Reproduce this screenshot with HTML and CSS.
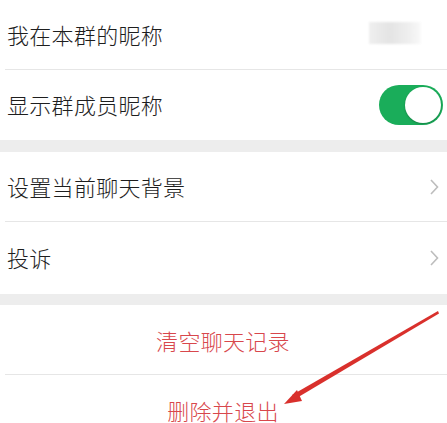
FILE: index.html
```html
<!DOCTYPE html>
<html lang="zh-CN">

<head>
    <meta charset="UTF-8">
    <meta name="viewport" content="width=device-width, initial-scale=1.0">
    <title>聊天信息</title>
    <link rel="stylesheet" href="styles.css">
</head>

<body>
    <div class="page">
        <div class="group">
            <div class="cell line">
                <span class="label">我在本群的昵称</span>
                <span class="nick-blur"></span>
            </div>
            <div class="cell">
                <span class="label">显示群成员昵称</span>
                <span class="switch on"><span class="knob"></span></span>
            </div>
        </div>

        <div class="gap"></div>

        <div class="group">
            <div class="cell line">
                <span class="label">设置当前聊天背景</span>
                <svg class="chevron" width="9" height="16" viewBox="0 0 9 16">
                    <path d="M1 1 L7.5 8 L1 15" fill="none" stroke="#bdbdbd" stroke-width="1.6" />
                </svg>
            </div>
            <div class="cell tall">
                <span class="label">投诉</span>
                <svg class="chevron" width="9" height="16" viewBox="0 0 9 16">
                    <path d="M1 1 L7.5 8 L1 15" fill="none" stroke="#bdbdbd" stroke-width="1.6" />
                </svg>
            </div>
        </div>

        <div class="gap small"></div>

        <div class="group">
            <div class="cell center line">
                <span class="danger">清空聊天记录</span>
            </div>
            <div class="cell center">
                <span class="danger">删除并退出</span>
            </div>
        </div>

        <!-- 红色箭头标注 -->
        <svg class="arrow" width="447" height="423" viewBox="0 0 447 423">
            <polygon points="438,311 439,313.5 295,399 292,395" fill="#d9302c" />
            <polygon points="284,404 297,390 302,401" fill="#d9302c" />
        </svg>
    </div>
</body>

</html>
```

FILE: styles.css
```css
body {
    margin: 0;
    background-color: #fff;
    font-family: "Noto Sans CJK SC", "Noto Sans", sans-serif;
}

.page {
    position: relative;
    width: 447px;
    height: 423px;
    overflow: hidden;
}

.group {
    background-color: #fff;
}

.cell {
    height: 70px;
    display: flex;
    align-items: center;
    justify-content: space-between;
    padding: 0 8px 0 7px;
    position: relative;
}

.cell.tall {
    height: 72px;
}

.cell.line::after {
    content: "";
    position: absolute;
    left: 5px;
    right: 0;
    bottom: 0;
    height: 1px;
    background-color: #e6e6e6;
}

.label {
    font-size: 22px;
    font-weight: 300;
    color: #1e1e1e;
    letter-spacing: 0.3px;
    margin-top: -3px;
}

.nick-blur {
    width: 52px;
    height: 22px;
    margin-right: 18px;
    margin-top: -4px;
    background: linear-gradient(90deg, #efefef, #e4e4e4 40%, #f0f0f0 80%, #fafafa);
    filter: blur(1px);
}

.switch {
    width: 64px;
    height: 40px;
    border-radius: 20px;
    background-color: #1aad5a;
    position: relative;
    margin-right: -4px;
}

.switch .knob {
    position: absolute;
    right: 2px;
    top: 2px;
    width: 36px;
    height: 36px;
    border-radius: 50%;
    background-color: #fff;
    box-shadow: 0 1px 2px rgba(0, 0, 0, 0.25);
}

.gap {
    height: 12px;
    background-color: #ededed;
}

.gap.small {
    height: 11px;
}

.cell.center {
    justify-content: center;
}

.danger {
    font-size: 22px;
    font-weight: 300;
    color: #d8474c;
    letter-spacing: 0.3px;
}

.arrow {
    position: absolute;
    left: 0;
    top: 0;
    pointer-events: none;
}
```
